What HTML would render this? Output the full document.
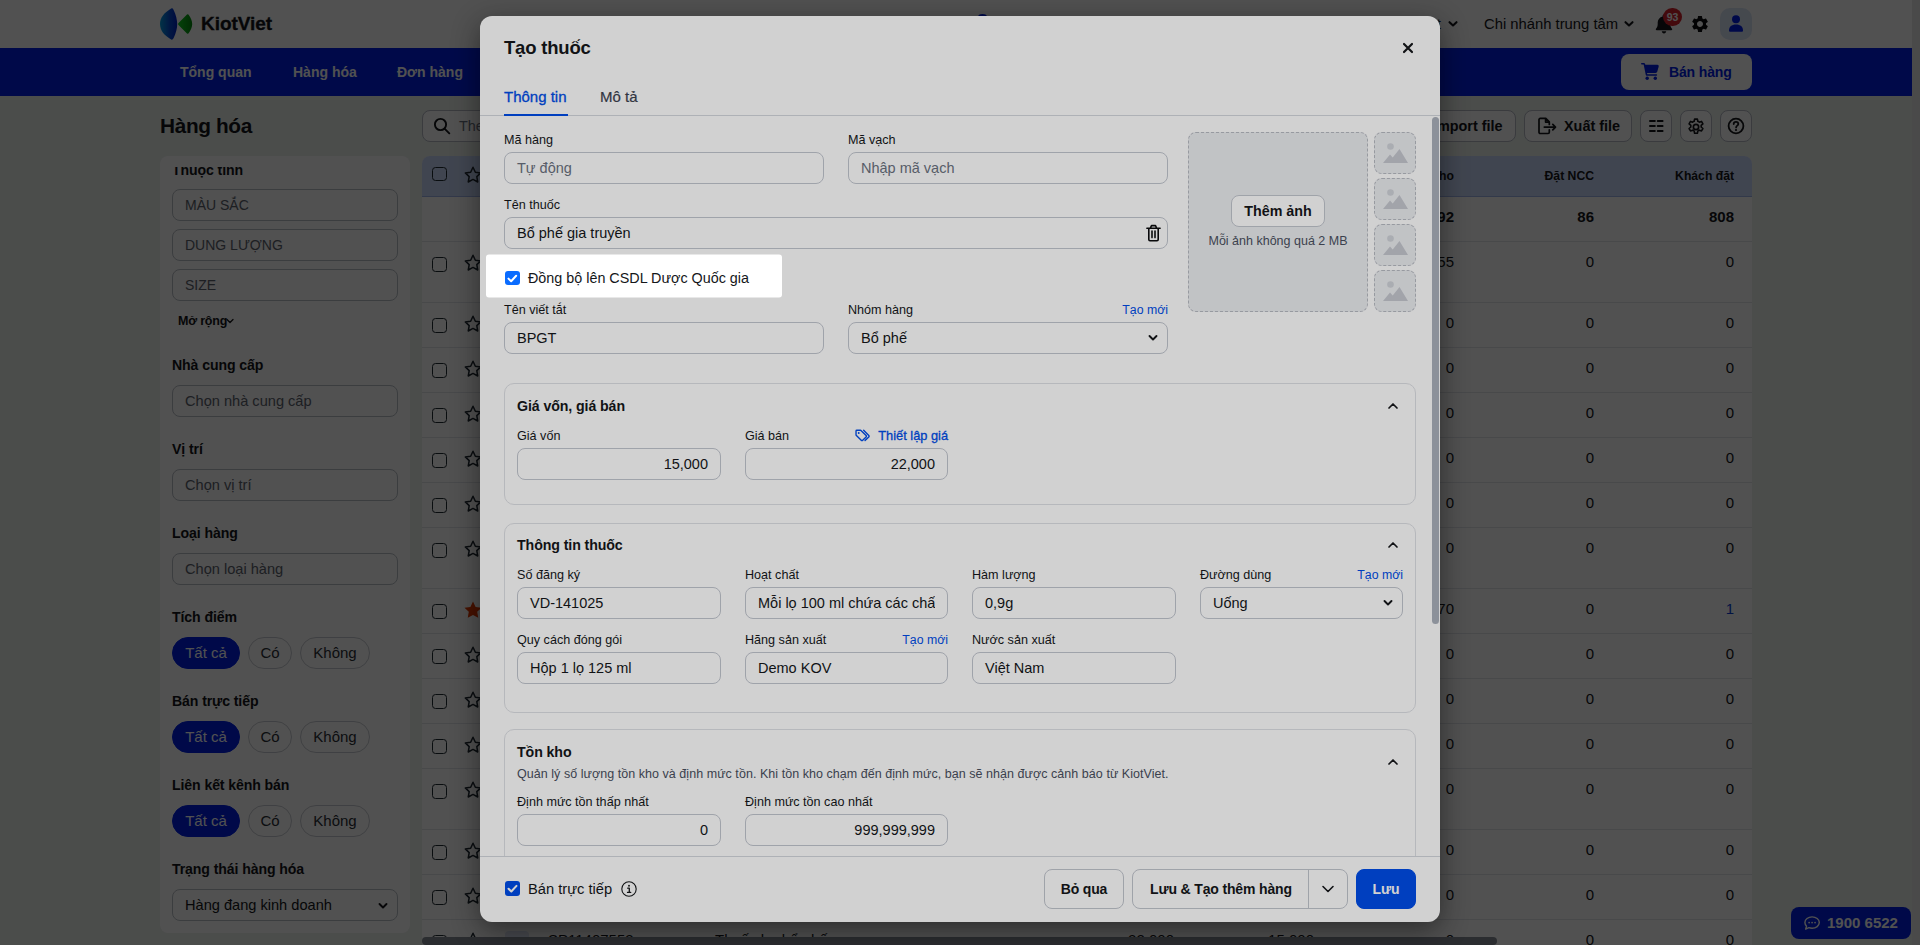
<!DOCTYPE html>
<html lang="vi">
<head>
<meta charset="utf-8">
<title>Hàng hóa - KiotViet</title>
<style>
*{box-sizing:border-box;margin:0;padding:0}
html,body{width:1920px;height:945px;overflow:hidden}
body{font-family:"Liberation Sans",sans-serif;font-size:14px;color:#15171a;background:#ecf1ee;position:relative}
.abs{position:absolute}
svg{display:block}
/* ---------- page ---------- */
#page{position:absolute;left:0;top:0;width:1912px;height:945px;overflow:hidden;background:#ecf1ee}
#vscroll{position:absolute;left:1912px;top:0;width:8px;height:945px;background:#e9e9e9}
#hdr{position:absolute;left:0;top:0;width:1912px;height:48px;background:#fff}
#nav{position:absolute;left:0;top:48px;width:1912px;height:48px;background:#0020e8}
#nav .it{position:absolute;top:0;height:48px;line-height:48px;font-size:14px;font-weight:700;color:#fff;white-space:nowrap}
.brand{position:absolute;left:201px;top:0;height:48px;line-height:48px;-webkit-text-stroke:.3px #15171a;font-size:19px;font-weight:700;color:#15171a;letter-spacing:-.05px}
.hr-t{position:absolute;top:0;height:48px;line-height:49px;font-size:14.8px;color:#15171a;white-space:nowrap}
#sell{position:absolute;left:1621px;top:6px;width:131px;height:36px;border-radius:8px;background:#fff;color:#0020e8;font-weight:700;font-size:14px;line-height:36px}
#sell span{position:absolute;left:48px;top:0;letter-spacing:-.15px}
/* toolbar */
.h1{position:absolute;left:160px;top:110px;height:32px;line-height:32px;font-size:20.8px;font-weight:700;letter-spacing:-.35px}
.tb{position:absolute;top:110px;height:32px;border:1px solid #b6bac3;border-radius:8px;background:#fff;font-weight:700;font-size:14.4px;line-height:30px;white-space:nowrap}
/* sidebar */
#side{position:absolute;left:160px;top:156px;width:250px;height:777px;background:#fff;border-radius:8px;overflow:hidden}
#side .ttl{position:absolute;left:12px;font-size:14.1px;font-weight:700;height:20px;line-height:20px;white-space:nowrap;letter-spacing:-.1px}
#side .inp{position:absolute;left:12px;width:226px;height:32px;border:1px solid #bcc0c8;border-radius:8px;line-height:30px;padding-left:12px;font-size:14.6px;color:#5d636e;white-space:nowrap}
#side .pill{position:absolute;height:32px;border:1px solid #c9ccd3;border-radius:16px;line-height:30px;text-align:center;font-size:15px;color:#2b2f36}
#side .pill.on{background:#0020e8;border-color:#0020e8;color:#fff}
/* table */
#tbl{position:absolute;left:422px;top:156px;width:1330px;height:789px;background:#fff;border-radius:8px 8px 0 0;overflow:hidden}
#tbl .th{position:absolute;left:0;top:0;width:1330px;height:41px;background:#ccdafb;border-bottom:1px solid #9fb5ea}
#tbl .row{position:absolute;left:0;width:1330px;border-bottom:1px solid #e3e5e9}
#tbl .c{position:absolute;text-align:right;font-size:15px;white-space:nowrap;height:20px;line-height:20px;top:10px}
#tbl .hc{position:absolute;text-align:right;font-size:12.2px;font-weight:700;white-space:nowrap;height:40px;line-height:41px;top:0}
.cb{position:absolute;left:10px;width:14.800px;height:14.800px;border:1.400px solid #1f2a33;border-radius:3.500px}
.st{position:absolute;left:41px;width:20px;height:20px}
/* overlays */
#backdrop{position:absolute;left:0;top:0;width:1920px;height:945px;background:rgba(0,0,0,.61)}
#tour{position:absolute;left:0;top:0;width:1920px;height:945px;pointer-events:none}
/* ---------- modal ---------- */
#modal{position:absolute;left:480px;top:16px;width:960px;height:906px;background:#fff;border-radius:12px;box-shadow:0 8px 28px rgba(0,0,0,.45);overflow:hidden}
#modal .lbl{position:absolute;font-size:12.6px;height:18px;line-height:18px;white-space:nowrap;color:#15171a}
#modal .lnk{position:absolute;font-size:12.3px;height:18px;line-height:18px;white-space:nowrap;color:#004eea;text-align:right}
#modal .in{position:absolute;height:32px;border:1px solid #c3c7d0;border-radius:8px;line-height:31px;padding:0 12px;font-size:14.5px;white-space:nowrap;color:#15171a;background:#fff}
#modal .in>i{display:block;font-style:normal;overflow:hidden;height:30px}
#modal .in.ph{color:#6b7280}
#modal .in.r{text-align:right}
#modal .card{position:absolute;left:24px;width:912px;border:1px solid #dfe1e6;border-radius:10px}
#modal .ct{position:absolute;left:12px;font-size:14.2px;font-weight:700;height:20px;line-height:20px;white-space:nowrap;letter-spacing:-.1px}
#modal .thumb{position:absolute;left:894px;width:42px;height:42px;border:1px dashed #b9bcc4;border-radius:8px;background:#eceef1}
#modal .thumb svg{position:absolute;left:8px;top:10px}
#modal .chev{position:absolute}
#modal .btn{position:absolute;top:853px;height:40px;border:1px solid #c3c7cf;border-radius:8px;background:#fff;font-size:14px;font-weight:700;line-height:38px;text-align:center;white-space:nowrap;color:#15171a;letter-spacing:-.15px}
</style>
</head>
<body>
<div id="page">
  <div id="hdr">
    <svg class="abs" style="left:160px;top:8px" width="33" height="32" viewBox="0 0 33 32">
      <defs><linearGradient id="lg" x1="0" y1="0" x2="1" y2="0"><stop offset="0" stop-color="#0aa0e0"/><stop offset=".55" stop-color="#0a4fd0"/><stop offset="1" stop-color="#0424c8"/></linearGradient>
      <linearGradient id="lg2" x1="0" y1="0" x2="1" y2="0"><stop offset="0" stop-color="#10d020"/><stop offset="1" stop-color="#068a10"/></linearGradient></defs>
      <path d="M10.400 1 Q12.400 -.6 13.500 1.700 C16 7 17.200 11.500 17.200 16 C17.200 20.500 16 25 13.500 30.300 Q12.400 32.600 10.400 31 C4.500 27.500 0 22.500 0 16 C0 9.500 4.500 4.500 10.400 1Z" fill="url(#lg)"/>
      <path d="M18.500 14.900 L27 6.600 Q28 5.700 28.800 6.900 C30.900 10 32.200 13 32.200 16 C32.200 19 30.900 22 28.800 25.100 Q28 26.300 27 25.400 L18.500 17.100 Q17.500 16 18.500 14.900Z" fill="url(#lg2)"/>
    </svg>
    <div class="abs" style="left:978px;top:13.500px;width:9px;height:6px;border-radius:50%;background:#0020e8"></div>
    <div class="brand">KiotViet</div>
    <div class="hr-t" style="left:1375px">Tiếng Việt</div>
    <svg class="abs" style="left:1448px;top:19px" width="10" height="10" viewBox="0 0 10 10"><path d="M1.500 3.200 L5 6.500 L8.500 3.200" fill="none" stroke="#15171a" stroke-width="2.100" stroke-linecap="round" stroke-linejoin="round"/></svg>
    <div class="hr-t" style="left:1484px">Chi nhánh trung tâm</div>
    <svg class="abs" style="left:1624px;top:19px" width="10" height="10" viewBox="0 0 10 10"><path d="M1.500 3.200 L5 6.500 L8.500 3.200" fill="none" stroke="#15171a" stroke-width="2.100" stroke-linecap="round" stroke-linejoin="round"/></svg>
    <!-- bell -->
    <svg class="abs" style="left:1655px;top:14px" width="18" height="20" viewBox="0 0 18 20"><path d="M9 0.5c-.8 0-1.4.6-1.4 1.3v.6C4.700 3 2.700 5.500 2.700 8.500v1.800c0 1.700-.6 3.300-1.700 4.500-.5.600-.1 1.500.7 1.500h14.600c.8 0 1.200-.9.700-1.500-1.100-1.200-1.700-2.800-1.700-4.500V8.500c0-3-2-5.500-4.900-6.100v-.6C10.400 1.100 9.800.5 9 .5zM6.800 17.300c0 1.200 1 2.200 2.200 2.200s2.200-1 2.200-2.200z" fill="#15171a"/></svg>
    <div class="abs" style="left:1663px;top:8px;width:19px;height:18px;border-radius:9px;background:#d9232e;color:#fff;font-size:10.500px;font-weight:700;line-height:18px;text-align:center">93</div>
    <!-- gear -->
    <svg class="abs" style="left:1690px;top:14px" width="20" height="20" viewBox="0 0 24 24"><path fill="#0b0c0e" d="M19.140 12.940c.040-.300.060-.610.060-.940 0-.320-.020-.640-.070-.940l2.030-1.580a.490.490 0 0 0 .12-.610l-1.920-3.320a.488.488 0 0 0-.590-.220l-2.390.960c-.500-.380-1.030-.700-1.620-.940l-.360-2.540a.484.484 0 0 0-.480-.410h-3.840c-.240 0-.430.170-.470.410l-.360 2.540c-.590.240-1.130.570-1.620.940l-2.390-.960c-.220-.080-.470 0-.590.220L2.740 8.870c-.120.210-.080.470.12.610l2.030 1.580c-.050.300-.090.630-.09.940s.020.640.070.940l-2.030 1.580a.490.490 0 0 0-.12.610l1.920 3.320c.12.220.370.290.590.220l2.390-.960c.500.380 1.030.700 1.620.940l.360 2.540c.050.240.240.410.480.410h3.840c.240 0 .440-.170.470-.410l.360-2.540c.590-.240 1.130-.560 1.620-.940l2.390.960c.220.080.470 0 .590-.220l1.920-3.320c.120-.220.070-.470-.120-.610l-2.010-1.580zM12 15.600c-1.980 0-3.600-1.620-3.600-3.600s1.620-3.600 3.600-3.600 3.600 1.620 3.600 3.600-1.620 3.600-3.600 3.600z"/></svg>
    <!-- avatar -->
    <div class="abs" style="left:1720px;top:8px;width:32px;height:32px;border-radius:10px;background:#dbe4f8"></div>
    <svg class="abs" style="left:1729px;top:15px" width="14" height="17" viewBox="0 0 14 17"><circle cx="7" cy="4.200" r="4" fill="#0020e8"/><path d="M0 15.500C0 11.800 2.500 9.500 7 9.500s7 2.300 7 6c0 .800-.5 1.300-1.300 1.300H1.300C.5 16.800 0 16.300 0 15.500z" fill="#0020e8"/></svg>
  </div>
  <div id="nav">
    <div class="it" style="left:180px">Tổng quan</div>
    <div class="it" style="left:293px">Hàng hóa</div>
    <div class="it" style="left:397px">Đơn hàng</div>
    <div class="it" style="left:503px">Khách hàng</div>
    <div class="it" style="left:625px">Nhân viên</div>
    <div class="it" style="left:735px">Sổ quỹ</div>
    <div class="it" style="left:822px">Báo cáo</div>
    <div class="it" style="left:920px">Bán online</div>
    <div id="sell">
      <svg class="abs" style="left:20px;top:9px" width="18" height="17" viewBox="0 0 18 17"><path d="M0 .8C0 .4.400 0 .8 0h1.700c.8 0 1.500.5 1.700 1.300l.1.500h12.200c.8 0 1.400.8 1.200 1.600l-1.400 5.200c-.2.800-.900 1.300-1.700 1.300H6l.3 1.300h9.100c.5 0 .8.400.8.800s-.4.800-.8.800H5.600c-.4 0-.7-.3-.8-.7L2.700 1.800c0-.1-.1-.2-.3-.2H.8C.4 1.600 0 1.300 0 .8z" fill="#0020e8"/><circle cx="6.200" cy="15.200" r="1.700" fill="#0020e8"/><circle cx="14.300" cy="15.200" r="1.700" fill="#0020e8"/></svg>
      <span>Bán hàng</span>
    </div>
  </div>
  <div class="h1">Hàng hóa</div>
  <div class="tb" style="left:422px;width:560px;font-weight:400;color:#6b7280;padding-left:36px">Theo mã, tên hàng
    <svg class="abs" style="left:10px;top:6px" width="18" height="18" viewBox="0 0 18 18"><circle cx="7.500" cy="7.500" r="5.600" fill="none" stroke="#15171a" stroke-width="1.900"/><path d="M11.800 11.800L16.300 16.300" stroke="#15171a" stroke-width="1.900" stroke-linecap="round"/></svg>
  </div>
  <div class="tb" style="left:1290px;width:104px;padding-left:36px;background:#0020e8;border-color:#0020e8;color:#fff">Tạo mới</div>
  <div class="tb" style="left:1403px;width:113px;padding-left:29px">Import file</div>
  <div class="tb" style="left:1524px;width:108px;padding-left:39px">Xuất file
    <svg class="abs" style="left:12px;top:6px" width="20" height="18" viewBox="0 0 20 18"><path d="M12.300 12.800V15.300c0 .7-.5 1.200-1.200 1.200H3.200c-.7 0-1.200-.5-1.200-1.200V2.600c0-.7.500-1.200 1.200-1.200h5.600L12.300 4.900v2.500M8.600 1.600v3.500h3.500" fill="none" stroke="#15171a" stroke-width="1.700" stroke-linejoin="round" stroke-linecap="round"/><path d="M7.300 10.100h11M15.800 7.400l2.700 2.700-2.700 2.700" fill="none" stroke="#15171a" stroke-width="1.700" stroke-linejoin="round" stroke-linecap="round"/></svg>
  </div>
  <div class="tb" style="left:1640px;width:32px">
    <svg class="abs" style="left:8px;top:8px" width="14.600" height="14" viewBox="0 0 16 14" preserveAspectRatio="none"><path d="M1 2h5.500M9.500 2H15M1 7h5.500M9.500 7H15M1 12h5.500M9.500 12H15" stroke="#15171a" stroke-width="1.900" stroke-linecap="round"/></svg>
  </div>
  <div class="tb" style="left:1680px;width:32px">
    <svg class="abs" style="left:5px;top:6px" width="20" height="20" viewBox="0 0 24 24"><path fill="none" stroke="#15171a" stroke-width="1.900" stroke-linejoin="round" d="M10.300 2.500h3.400l.5 2.700c.6.200 1.200.6 1.800 1l2.600-.9 1.700 2.900-2.100 1.800c.1.700.1 1.300 0 2l2.100 1.800-1.700 2.900-2.600-.9c-.5.400-1.100.8-1.800 1l-.5 2.700h-3.400l-.5-2.700c-.6-.2-1.200-.6-1.800-1l-2.600.9-1.700-2.900 2.100-1.800c-.1-.7-.1-1.300 0-2L3.700 8.200l1.700-2.900 2.600.9c.5-.4 1.100-.8 1.800-1z"/><circle cx="12" cy="12" r="3.200" fill="none" stroke="#15171a" stroke-width="2"/></svg>
  </div>
  <div class="tb" style="left:1720px;width:32px">
    <svg class="abs" style="left:6px;top:6px" width="18" height="18" viewBox="0 0 18 18"><circle cx="9" cy="9" r="7.400" fill="none" stroke="#15171a" stroke-width="1.800"/><path d="M6.700 7.100c0-1.400 1-2.300 2.300-2.300s2.300.9 2.300 2.100c0 1.700-2.200 1.700-2.200 3.500" fill="none" stroke="#15171a" stroke-width="1.800" stroke-linecap="round"/><circle cx="9" cy="13" r="1.100" fill="#15171a"/></svg>
  </div>
  <div id="side"><div class="abs" style="left:0;top:11px;width:250px;height:766px;overflow:hidden"><div class="abs" style="left:0;top:-11px;width:250px;height:777px">
    <div class="ttl" style="top:3.500px">Thuộc tính</div>
    <div class="inp" style="top:33px;font-size:14px">MÀU SẮC</div>
    <div class="inp" style="top:73px;font-size:14px">DUNG LƯỢNG</div>
    <div class="inp" style="top:113px;font-size:14px">SIZE</div>
    <div class="abs" style="left:18px;top:155px;font-size:12.5px;font-weight:700;height:20px;line-height:20px;letter-spacing:-.2px">Mở rộng</div>
    <svg class="abs" style="left:66px;top:161px" width="8" height="8" viewBox="0 0 8 8"><path d="M1 2.500L4 5.500L7 2.500" fill="none" stroke="#15171a" stroke-width="1.300" stroke-linecap="round" stroke-linejoin="round"/></svg>
    <div class="ttl" style="top:199px">Nhà cung cấp</div>
    <div class="inp" style="top:229px">Chọn nhà cung cấp</div>
    <div class="ttl" style="top:283px">Vị trí</div>
    <div class="inp" style="top:313px">Chọn vị trí</div>
    <div class="ttl" style="top:367px">Loại hàng</div>
    <div class="inp" style="top:397px">Chọn loại hàng</div>
    <div class="ttl" style="top:451px">Tích điểm</div>
    <div class="pill on" style="left:12px;top:481px;width:68px">Tất cả</div>
    <div class="pill" style="left:88px;top:481px;width:44px">Có</div>
    <div class="pill" style="left:140px;top:481px;width:70px">Không</div>
    <div class="ttl" style="top:535px">Bán trực tiếp</div>
    <div class="pill on" style="left:12px;top:565px;width:68px">Tất cả</div>
    <div class="pill" style="left:88px;top:565px;width:44px">Có</div>
    <div class="pill" style="left:140px;top:565px;width:70px">Không</div>
    <div class="ttl" style="top:619px">Liên kết kênh bán</div>
    <div class="pill on" style="left:12px;top:649px;width:68px">Tất cả</div>
    <div class="pill" style="left:88px;top:649px;width:44px">Có</div>
    <div class="pill" style="left:140px;top:649px;width:70px">Không</div>
    <div class="ttl" style="top:703px">Trạng thái hàng hóa</div>
    <div class="inp" style="top:733px;color:#15171a">Hàng đang kinh doanh</div>
    <svg class="abs" style="left:218px;top:745px" width="10" height="10" viewBox="0 0 10 10"><path d="M1.500 3L5 6.500L8.500 3" fill="none" stroke="#15171a" stroke-width="1.900" stroke-linecap="round" stroke-linejoin="round"/></svg>
  </div></div></div>
  <div id="tbl">
    <div class="th"><div class="cb" style="top:10.500px"></div><svg class="st" style="top:8.700px" width="20" height="20" viewBox="0 0 20 20"><path d="M10 2.300l2.350 4.900 5.350.700-3.900 3.750.950 5.350L10 14.400 5.250 17l.950-5.350L2.300 7.900l5.350-.700z" fill="none" stroke="#1f2a33" stroke-width="1.500" stroke-linejoin="round"/></svg><div class="hc" style="left:126px">Mã hàng</div><div class="hc" style="left:293px">Tên hàng</div><div class="hc" style="right:578px">Giá bán</div><div class="hc" style="right:438px">Giá vốn</div><div class="hc" style="right:298px">Tồn kho</div><div class="hc" style="right:158px">Đặt NCC</div><div class="hc" style="right:18px">Khách đặt</div></div>
    <div class="row" style="top:41px;height:45px"><div class="c" style="right:298px;font-weight:700">1,292</div><div class="c" style="right:158px;font-weight:700">86</div><div class="c" style="right:18px;font-weight:700">808</div></div>
    <div class="row" style="top:86px;height:61px"><div class="cb" style="top:15px"></div><svg class="st" style="top:10.700px" width="20" height="20" viewBox="0 0 20 20"><path d="M10 2.300l2.350 4.900 5.350.700-3.900 3.750.950 5.350L10 14.400 5.250 17l.950-5.350L2.300 7.900l5.350-.700z" fill="none" stroke="#1f2a33" stroke-width="1.500" stroke-linejoin="round"/></svg><div class="abs" style="left:83px;top:11px;width:24px;height:24px;border-radius:4px;background:#dfe6f7"></div><div class="c" style="left:126px;text-align:left">SP11407568</div><div class="c" style="left:293px;text-align:left">Bổ phế Nam Hà chỉ khái lộ</div><div class="c" style="right:578px">22,000</div><div class="c" style="right:438px">15,000</div><div class="c" style="right:298px">55</div><div class="c" style="right:158px">0</div><div class="c" style="right:18px">0</div></div>
    <div class="row" style="top:147px;height:45px"><div class="cb" style="top:15px"></div><svg class="st" style="top:10.700px" width="20" height="20" viewBox="0 0 20 20"><path d="M10 2.300l2.350 4.900 5.350.700-3.900 3.750.950 5.350L10 14.400 5.250 17l.950-5.350L2.300 7.900l5.350-.700z" fill="none" stroke="#1f2a33" stroke-width="1.500" stroke-linejoin="round"/></svg><div class="abs" style="left:83px;top:11px;width:24px;height:24px;border-radius:4px;background:#dfe6f7"></div><div class="c" style="left:126px;text-align:left">SP11407567</div><div class="c" style="left:293px;text-align:left">Panadol Extra đỏ</div><div class="c" style="right:578px">22,000</div><div class="c" style="right:438px">15,000</div><div class="c" style="right:298px">0</div><div class="c" style="right:158px">0</div><div class="c" style="right:18px">0</div></div>
    <div class="row" style="top:192px;height:45px"><div class="cb" style="top:15px"></div><svg class="st" style="top:10.700px" width="20" height="20" viewBox="0 0 20 20"><path d="M10 2.300l2.350 4.900 5.350.700-3.900 3.750.950 5.350L10 14.400 5.250 17l.950-5.350L2.300 7.900l5.350-.700z" fill="none" stroke="#1f2a33" stroke-width="1.500" stroke-linejoin="round"/></svg><div class="abs" style="left:83px;top:11px;width:24px;height:24px;border-radius:4px;background:#dfe6f7"></div><div class="c" style="left:126px;text-align:left">SP11407566</div><div class="c" style="left:293px;text-align:left">Berberin 100mg</div><div class="c" style="right:578px">22,000</div><div class="c" style="right:438px">15,000</div><div class="c" style="right:298px">0</div><div class="c" style="right:158px">0</div><div class="c" style="right:18px">0</div></div>
    <div class="row" style="top:237px;height:45px"><div class="cb" style="top:15px"></div><svg class="st" style="top:10.700px" width="20" height="20" viewBox="0 0 20 20"><path d="M10 2.300l2.350 4.900 5.350.700-3.900 3.750.950 5.350L10 14.400 5.250 17l.950-5.350L2.300 7.900l5.350-.700z" fill="none" stroke="#1f2a33" stroke-width="1.500" stroke-linejoin="round"/></svg><div class="abs" style="left:83px;top:11px;width:24px;height:24px;border-radius:4px;background:#dfe6f7"></div><div class="c" style="left:126px;text-align:left">SP11407565</div><div class="c" style="left:293px;text-align:left">Vitamin C 500mg</div><div class="c" style="right:578px">22,000</div><div class="c" style="right:438px">15,000</div><div class="c" style="right:298px">0</div><div class="c" style="right:158px">0</div><div class="c" style="right:18px">0</div></div>
    <div class="row" style="top:282px;height:45px"><div class="cb" style="top:15px"></div><svg class="st" style="top:10.700px" width="20" height="20" viewBox="0 0 20 20"><path d="M10 2.300l2.350 4.900 5.350.700-3.900 3.750.950 5.350L10 14.400 5.250 17l.950-5.350L2.300 7.900l5.350-.700z" fill="none" stroke="#1f2a33" stroke-width="1.500" stroke-linejoin="round"/></svg><div class="abs" style="left:83px;top:11px;width:24px;height:24px;border-radius:4px;background:#dfe6f7"></div><div class="c" style="left:126px;text-align:left">SP11407564</div><div class="c" style="left:293px;text-align:left">Efferalgan 500mg</div><div class="c" style="right:578px">22,000</div><div class="c" style="right:438px">15,000</div><div class="c" style="right:298px">0</div><div class="c" style="right:158px">0</div><div class="c" style="right:18px">0</div></div>
    <div class="row" style="top:327px;height:45px"><div class="cb" style="top:15px"></div><svg class="st" style="top:10.700px" width="20" height="20" viewBox="0 0 20 20"><path d="M10 2.300l2.350 4.900 5.350.700-3.900 3.750.950 5.350L10 14.400 5.250 17l.950-5.350L2.300 7.900l5.350-.700z" fill="none" stroke="#1f2a33" stroke-width="1.500" stroke-linejoin="round"/></svg><div class="abs" style="left:83px;top:11px;width:24px;height:24px;border-radius:4px;background:#dfe6f7"></div><div class="c" style="left:126px;text-align:left">SP11407563</div><div class="c" style="left:293px;text-align:left">Nước muối sinh lý 0.9%</div><div class="c" style="right:578px">22,000</div><div class="c" style="right:438px">15,000</div><div class="c" style="right:298px">0</div><div class="c" style="right:158px">0</div><div class="c" style="right:18px">0</div></div>
    <div class="row" style="top:372px;height:61px"><div class="cb" style="top:15px"></div><svg class="st" style="top:10.700px" width="20" height="20" viewBox="0 0 20 20"><path d="M10 2.300l2.350 4.900 5.350.700-3.900 3.750.950 5.350L10 14.400 5.250 17l.950-5.350L2.300 7.900l5.350-.700z" fill="none" stroke="#1f2a33" stroke-width="1.500" stroke-linejoin="round"/></svg><div class="abs" style="left:83px;top:11px;width:24px;height:24px;border-radius:4px;background:#dfe6f7"></div><div class="c" style="left:126px;text-align:left">SP11407562</div><div class="c" style="left:293px;text-align:left">Khẩu trang y tế 4 lớp kháng khuẩn</div><div class="c" style="right:578px">22,000</div><div class="c" style="right:438px">15,000</div><div class="c" style="right:298px">0</div><div class="c" style="right:158px">0</div><div class="c" style="right:18px">0</div></div>
    <div class="row" style="top:433px;height:45px"><div class="cb" style="top:15px"></div><svg class="st" style="top:10.700px" width="20" height="20" viewBox="0 0 20 20"><path d="M10 1.500l2.600 5.400 5.900.800-4.300 4.100 1.050 5.900L10 14.900 4.750 17.700l1.050-5.900L1.500 7.700l5.900-.800z" fill="#e03a00"/></svg><div class="abs" style="left:83px;top:11px;width:24px;height:24px;border-radius:4px;background:#dfe6f7"></div><div class="c" style="left:126px;text-align:left">SP11407561</div><div class="c" style="left:293px;text-align:left">Siro ho Prospan 100ml</div><div class="c" style="right:578px">22,000</div><div class="c" style="right:438px">15,000</div><div class="c" style="right:298px">70</div><div class="c" style="right:158px">0</div><div class="c" style="right:18px;color:#0a3fd6">1</div></div>
    <div class="row" style="top:478px;height:45px"><div class="cb" style="top:15px"></div><svg class="st" style="top:10.700px" width="20" height="20" viewBox="0 0 20 20"><path d="M10 2.300l2.350 4.900 5.350.700-3.900 3.750.950 5.350L10 14.400 5.250 17l.950-5.350L2.300 7.900l5.350-.700z" fill="none" stroke="#1f2a33" stroke-width="1.500" stroke-linejoin="round"/></svg><div class="abs" style="left:83px;top:11px;width:24px;height:24px;border-radius:4px;background:#dfe6f7"></div><div class="c" style="left:126px;text-align:left">SP11407560</div><div class="c" style="left:293px;text-align:left">Băng cá nhân Urgo</div><div class="c" style="right:578px">22,000</div><div class="c" style="right:438px">15,000</div><div class="c" style="right:298px">0</div><div class="c" style="right:158px">0</div><div class="c" style="right:18px">0</div></div>
    <div class="row" style="top:523px;height:45px"><div class="cb" style="top:15px"></div><svg class="st" style="top:10.700px" width="20" height="20" viewBox="0 0 20 20"><path d="M10 2.300l2.350 4.900 5.350.700-3.900 3.750.950 5.350L10 14.400 5.250 17l.950-5.350L2.300 7.900l5.350-.700z" fill="none" stroke="#1f2a33" stroke-width="1.500" stroke-linejoin="round"/></svg><div class="abs" style="left:83px;top:11px;width:24px;height:24px;border-radius:4px;background:#dfe6f7"></div><div class="c" style="left:126px;text-align:left">SP11407559</div><div class="c" style="left:293px;text-align:left">Dầu gió xanh Thiên Thảo</div><div class="c" style="right:578px">22,000</div><div class="c" style="right:438px">15,000</div><div class="c" style="right:298px">0</div><div class="c" style="right:158px">0</div><div class="c" style="right:18px">0</div></div>
    <div class="row" style="top:568px;height:45px"><div class="cb" style="top:15px"></div><svg class="st" style="top:10.700px" width="20" height="20" viewBox="0 0 20 20"><path d="M10 2.300l2.350 4.900 5.350.700-3.900 3.750.950 5.350L10 14.400 5.250 17l.950-5.350L2.300 7.900l5.350-.700z" fill="none" stroke="#1f2a33" stroke-width="1.500" stroke-linejoin="round"/></svg><div class="abs" style="left:83px;top:11px;width:24px;height:24px;border-radius:4px;background:#dfe6f7"></div><div class="c" style="left:126px;text-align:left">SP11407558</div><div class="c" style="left:293px;text-align:left">Thuốc nhỏ mắt V.Rohto</div><div class="c" style="right:578px">22,000</div><div class="c" style="right:438px">15,000</div><div class="c" style="right:298px">0</div><div class="c" style="right:158px">0</div><div class="c" style="right:18px">0</div></div>
    <div class="row" style="top:613px;height:61px"><div class="cb" style="top:15px"></div><svg class="st" style="top:10.700px" width="20" height="20" viewBox="0 0 20 20"><path d="M10 2.300l2.350 4.900 5.350.700-3.900 3.750.950 5.350L10 14.400 5.250 17l.950-5.350L2.300 7.900l5.350-.700z" fill="none" stroke="#1f2a33" stroke-width="1.500" stroke-linejoin="round"/></svg><div class="abs" style="left:83px;top:11px;width:24px;height:24px;border-radius:4px;background:#dfe6f7"></div><div class="c" style="left:126px;text-align:left">SP11407557</div><div class="c" style="left:293px;text-align:left">Men vi sinh Enterogermina 5ml</div><div class="c" style="right:578px">22,000</div><div class="c" style="right:438px">15,000</div><div class="c" style="right:298px">0</div><div class="c" style="right:158px">0</div><div class="c" style="right:18px">0</div></div>
    <div class="row" style="top:674px;height:45px"><div class="cb" style="top:15px"></div><svg class="st" style="top:10.700px" width="20" height="20" viewBox="0 0 20 20"><path d="M10 2.300l2.350 4.900 5.350.700-3.900 3.750.950 5.350L10 14.400 5.250 17l.950-5.350L2.300 7.900l5.350-.700z" fill="none" stroke="#1f2a33" stroke-width="1.500" stroke-linejoin="round"/></svg><div class="abs" style="left:83px;top:11px;width:24px;height:24px;border-radius:4px;background:#dfe6f7"></div><div class="c" style="left:126px;text-align:left">SP11407556</div><div class="c" style="left:293px;text-align:left">Cao dán Salonpas</div><div class="c" style="right:578px">22,000</div><div class="c" style="right:438px">15,000</div><div class="c" style="right:298px">0</div><div class="c" style="right:158px">0</div><div class="c" style="right:18px">0</div></div>
    <div class="row" style="top:719px;height:45px"><div class="cb" style="top:15px"></div><svg class="st" style="top:10.700px" width="20" height="20" viewBox="0 0 20 20"><path d="M10 2.300l2.350 4.900 5.350.700-3.900 3.750.950 5.350L10 14.400 5.250 17l.950-5.350L2.300 7.900l5.350-.700z" fill="none" stroke="#1f2a33" stroke-width="1.500" stroke-linejoin="round"/></svg><div class="abs" style="left:83px;top:11px;width:24px;height:24px;border-radius:4px;background:#dfe6f7"></div><div class="c" style="left:126px;text-align:left">SP11407555</div><div class="c" style="left:293px;text-align:left">Oresol cam</div><div class="c" style="right:578px">22,000</div><div class="c" style="right:438px">15,000</div><div class="c" style="right:298px">0</div><div class="c" style="right:158px">0</div><div class="c" style="right:18px">0</div></div>
    <div class="row" style="top:764px;height:45px"><div class="cb" style="top:15px"></div><svg class="st" style="top:10.700px" width="20" height="20" viewBox="0 0 20 20"><path d="M10 2.300l2.350 4.900 5.350.700-3.900 3.750.950 5.350L10 14.400 5.250 17l.950-5.350L2.300 7.900l5.350-.700z" fill="none" stroke="#1f2a33" stroke-width="1.500" stroke-linejoin="round"/></svg><div class="abs" style="left:83px;top:11px;width:24px;height:24px;border-radius:4px;background:#dfe6f7"></div><div class="c" style="left:126px;text-align:left">SP11407553</div><div class="c" style="left:293px;text-align:left">Thuốc ho bổ phế</div><div class="c" style="right:578px">22,000</div><div class="c" style="right:438px">15,000</div><div class="c" style="right:298px">0</div><div class="c" style="right:158px">0</div><div class="c" style="right:18px">0</div></div>
    <div class="abs" style="left:0;top:781px;width:1075px;height:8px;border-radius:4px;background:#8a8f99"></div>
  </div>
  <div class="abs" style="left:1791px;top:907px;width:120px;height:32px;border-radius:8px;background:#0020e8;color:#fff;font-weight:700;font-size:15px;line-height:32px;padding-left:36px;letter-spacing:0;white-space:nowrap">1900 6522
    <svg class="abs" style="left:13px;top:9px" width="16.200" height="14.400" viewBox="0 0 18 16"><path d="M9 1C4.600 1 1 3.800 1 7.300c0 1.500.7 2.900 1.800 4l-.9 3.200 3.500-1.500c1.100.4 2.300.6 3.600.6 4.400 0 8-2.800 8-6.300S13.400 1 9 1z" fill="none" stroke="#fff" stroke-width="1.600" stroke-linejoin="round"/><circle cx="5.700" cy="7.300" r="1" fill="#fff"/><circle cx="9" cy="7.300" r="1" fill="#fff"/><circle cx="12.300" cy="7.300" r="1" fill="#fff"/></svg>
  </div>
</div>
<div id="vscroll"></div>
<div id="backdrop"></div>
<div id="modal">
  <div class="abs" style="left:24px;top:20px;height:24px;line-height:24px;font-size:18.5px;font-weight:700;letter-spacing:-.2px;white-space:nowrap">Tạo thuốc</div>
  <svg class="abs" style="left:922px;top:26px" width="12" height="12" viewBox="0 0 12 12"><path d="M2 2L10 10M10 2L2 10" stroke="#15171a" stroke-width="2.200" stroke-linecap="round"/></svg>
  <div class="abs" style="left:24px;top:71px;height:20px;line-height:20px;font-size:15px;color:#004eea;white-space:nowrap;-webkit-text-stroke:.3px #004eea">Thông tin</div>
  <div class="abs" style="left:120px;top:71px;height:20px;line-height:20px;font-size:15px;color:#3c4250;white-space:nowrap;-webkit-text-stroke:.2px #3c4250">Mô tả</div>
  <div class="abs" style="left:0;top:99px;width:960px;height:1px;background:#d5d8de"></div>
  <div class="abs" style="left:24px;top:98px;width:64px;height:2px;background:#004eea"></div>
  <!-- scroll body -->
  <div class="abs" id="mbody" style="left:0;top:100px;width:960px;height:740px;overflow:hidden">
   <div class="abs" style="left:0;top:-100px;width:960px;height:1000px">
    <div class="lbl" style="left:24px;top:115px">Mã hàng</div>
    <div class="in ph" style="left:24px;top:136px;width:320px">Tự động</div>
    <div class="lbl" style="left:368px;top:115px">Mã vạch</div>
    <div class="in ph" style="left:368px;top:136px;width:320px">Nhập mã vạch</div>
    <div class="lbl" style="left:24px;top:180px">Tên thuốc</div>
    <div class="in" style="left:24px;top:201px;width:664px">Bổ phế gia truyền</div>
    <svg class="abs" style="left:665.500px;top:208px" width="15" height="18" viewBox="0 0 15 18"><path d="M.9 4.200h13.200M4.400 4L5.500 1.600h4l1.100 2.400M2.800 4.500v11c0 .7.500 1.200 1.200 1.200h7c.7 0 1.200-.5 1.200-1.200v-11M6 7v6.600M9 7v6.600" fill="none" stroke="#0b0c0e" stroke-width="1.600" stroke-linecap="round" stroke-linejoin="round"/></svg>
    <div class="abs" style="left:25px;top:254.700px;width:14.600px;height:14.600px;border-radius:3px;background:#0a6cff"></div>
    <svg class="abs" style="left:25px;top:254.700px" width="14.600" height="14.600" viewBox="0 0 14 14"><path d="M3.300 7.300L5.900 9.800L10.700 4.600" fill="none" stroke="#fff" stroke-width="1.900" stroke-linecap="round" stroke-linejoin="round"/></svg>
    <div class="abs" style="left:48px;top:252px;height:20px;line-height:20px;font-size:14.350px;white-space:nowrap;color:#15171a">Đồng bộ lên CSDL Dược Quốc gia</div>
    <div class="lbl" style="left:24px;top:285px">Tên viết tắt</div>
    <div class="in" style="left:24px;top:306px;width:320px">BPGT</div>
    <div class="lbl" style="left:368px;top:285px">Nhóm hàng</div>
    <div class="lnk" style="right:272px;top:285px">Tạo mới</div>
    <div class="in" style="left:368px;top:306px;width:320px">Bổ phế</div>
    <svg class="abs" style="left:668px;top:317px" width="10" height="10" viewBox="0 0 10 10"><path d="M1.500 3L5 6.500L8.500 3" fill="none" stroke="#15171a" stroke-width="1.900" stroke-linecap="round" stroke-linejoin="round"/></svg>
    <!-- images -->
    <div class="abs" style="left:708px;top:116px;width:180px;height:180px;border:1px dashed #b9bcc4;border-radius:8px;background:#eceef1"></div>
    <div class="abs" style="left:751px;top:179px;width:94px;height:32px;border:1px solid #c3c7cf;border-radius:8px;background:#fff;font-size:14.3px;font-weight:700;line-height:30px;text-align:center">Thêm ảnh</div>
    <div class="abs" style="left:708px;top:216px;width:180px;height:18px;line-height:18px;font-size:12.500px;color:#4a5060;text-align:center;white-space:nowrap">Mỗi ảnh không quá 2 MB</div>
    <div class="thumb" style="top:116px"><svg width="25" height="20" viewBox="0 0 25 20"><circle cx="7.500" cy="3.500" r="3.300" fill="#d0d3d9"/><path d="M0 20L7 11.500l2.700 3L16.500 6 25 20z" fill="#c6c9d0"/></svg></div>
    <div class="thumb" style="top:162px"><svg width="25" height="20" viewBox="0 0 25 20"><circle cx="7.500" cy="3.500" r="3.300" fill="#d0d3d9"/><path d="M0 20L7 11.500l2.700 3L16.500 6 25 20z" fill="#c6c9d0"/></svg></div>
    <div class="thumb" style="top:208px"><svg width="25" height="20" viewBox="0 0 25 20"><circle cx="7.500" cy="3.500" r="3.300" fill="#d0d3d9"/><path d="M0 20L7 11.500l2.700 3L16.500 6 25 20z" fill="#c6c9d0"/></svg></div>
    <div class="thumb" style="top:254px"><svg width="25" height="20" viewBox="0 0 25 20"><circle cx="7.500" cy="3.500" r="3.300" fill="#d0d3d9"/><path d="M0 20L7 11.500l2.700 3L16.500 6 25 20z" fill="#c6c9d0"/></svg></div>
    <!-- card 1 -->
    <div class="card" style="top:367px;height:122px"></div>
    <div class="ct" style="left:37px;top:380px">Giá vốn, giá bán</div>
    <svg class="chev" style="left:907px;top:384px" width="12" height="12" viewBox="0 0 12 12"><path d="M2 8L6 4L10 8" fill="none" stroke="#15171a" stroke-width="1.700" stroke-linecap="round" stroke-linejoin="round"/></svg>
    <div class="lbl" style="left:37px;top:411px">Giá vốn</div>
    <div class="in r" style="left:37px;top:432px;width:204px">15,000</div>
    <div class="lbl" style="left:265px;top:411px">Giá bán</div>
    <svg class="abs" style="left:375px;top:413px" width="15.600" height="13" viewBox="0 0 18 15"><path d="M1.200 2.400v4.200c0 .3.100.6.400.9l5.600 5.600c.5.500 1.200.5 1.700 0l3.900-3.900c.5-.5.500-1.200 0-1.700L7.200 1.900c-.2-.2-.5-.4-.9-.4H2.100c-.5 0-.9.400-.9.900z" fill="none" stroke="#004eea" stroke-width="1.600" stroke-linejoin="round"/><circle cx="4.300" cy="4.600" r="1.100" fill="#004eea"/><path d="M10 1.500l5.900 5.900c.5.500.5 1.200 0 1.700l-4.300 4.300" fill="none" stroke="#004eea" stroke-width="1.600" stroke-linecap="round" stroke-linejoin="round"/></svg>
    <div class="lnk" style="right:492px;top:411px;font-size:12.800px;-webkit-text-stroke:.3px #004eea">Thiết lập giá</div>
    <div class="in r" style="left:265px;top:432px;width:203px">22,000</div>
    <!-- card 2 -->
    <div class="card" style="top:507px;height:190px"></div>
    <div class="ct" style="left:37px;top:519px">Thông tin thuốc</div>
    <svg class="chev" style="left:907px;top:523px" width="12" height="12" viewBox="0 0 12 12"><path d="M2 8L6 4L10 8" fill="none" stroke="#15171a" stroke-width="1.700" stroke-linecap="round" stroke-linejoin="round"/></svg>
    <div class="lbl" style="left:37px;top:550px">Số đăng ký</div>
    <div class="in" style="left:37px;top:571px;width:204px">VD-141025</div>
    <div class="lbl" style="left:265px;top:550px">Hoạt chất</div>
    <div class="in" style="left:265px;top:571px;width:203px"><i>Mỗi lọ 100 ml chứa các chất chiết</i></div>
    <div class="lbl" style="left:492px;top:550px">Hàm lượng</div>
    <div class="in" style="left:492px;top:571px;width:204px">0,9g</div>
    <div class="lbl" style="left:720px;top:550px">Đường dùng</div>
    <div class="lnk" style="right:37px;top:550px">Tạo mới</div>
    <div class="in" style="left:720px;top:571px;width:203px">Uống</div>
    <svg class="abs" style="left:903px;top:582px" width="10" height="10" viewBox="0 0 10 10"><path d="M1.500 3L5 6.500L8.500 3" fill="none" stroke="#15171a" stroke-width="1.900" stroke-linecap="round" stroke-linejoin="round"/></svg>
    <div class="lbl" style="left:37px;top:615px">Quy cách đóng gói</div>
    <div class="in" style="left:37px;top:636px;width:204px">Hộp 1 lọ 125 ml</div>
    <div class="lbl" style="left:265px;top:615px">Hãng sản xuất</div>
    <div class="lnk" style="right:492px;top:615px">Tạo mới</div>
    <div class="in" style="left:265px;top:636px;width:203px">Demo KOV</div>
    <div class="lbl" style="left:492px;top:615px">Nước sản xuất</div>
    <div class="in" style="left:492px;top:636px;width:204px">Việt Nam</div>
    <!-- card 3 -->
    <div class="card" style="top:713px;height:200px"></div>
    <div class="ct" style="left:37px;top:726px">Tồn kho</div>
    <svg class="chev" style="left:907px;top:740px" width="12" height="12" viewBox="0 0 12 12"><path d="M2 8L6 4L10 8" fill="none" stroke="#15171a" stroke-width="1.700" stroke-linecap="round" stroke-linejoin="round"/></svg>
    <div class="abs" style="left:37px;top:749px;height:18px;line-height:18px;font-size:12.500px;color:#4a5060;white-space:nowrap;letter-spacing:.045px">Quản lý số lượng tồn kho và định mức tồn. Khi tồn kho chạm đến định mức, bạn sẽ nhận được cảnh báo từ KiotViet.</div>
    <div class="lbl" style="left:37px;top:777px">Định mức tồn thấp nhất</div>
    <div class="in r" style="left:37px;top:798px;width:204px">0</div>
    <div class="lbl" style="left:265px;top:777px">Định mức tồn cao nhất</div>
    <div class="in r" style="left:265px;top:798px;width:203px">999,999,999</div>
   </div>
  </div>
  <!-- scrollbar -->
  <div class="abs" style="left:952px;top:101px;width:7px;height:507px;border-radius:4px;background:#abb1bc"></div>
  <!-- footer -->
  <div class="abs" style="left:0;top:840px;width:960px;height:1px;background:#d5d8de"></div>
  <div class="abs" style="left:25px;top:865px;width:15px;height:15px;border-radius:3px;background:#004eea"></div>
  <svg class="abs" style="left:25px;top:865px" width="15" height="15" viewBox="0 0 14 14"><path d="M3.300 7.300L5.900 9.800L10.700 4.600" fill="none" stroke="#fff" stroke-width="1.900" stroke-linecap="round" stroke-linejoin="round"/></svg>
  <div class="abs" style="left:48px;top:863px;height:20px;line-height:20px;font-size:14.7px;white-space:nowrap">Bán trực tiếp</div>
  <svg class="abs" style="left:141px;top:864.500px" width="16" height="16" viewBox="0 0 16 16"><circle cx="8" cy="8" r="7.200" fill="none" stroke="#15171a" stroke-width="1.100"/><circle cx="8" cy="4.700" r=".95" fill="#15171a"/><path d="M6.700 7.200h1.600v4M6.500 11.400h3.200" fill="none" stroke="#15171a" stroke-width="1.300" stroke-linecap="round" stroke-linejoin="round"/></svg>
  <div class="btn" style="left:564px;width:80px">Bỏ qua</div>
  <div class="btn" style="left:652px;width:216px;text-align:left;padding-left:17px">Lưu &amp; Tạo thêm hàng</div>
  <div class="abs" style="left:828px;top:854px;width:1px;height:38px;background:#c3c7cf"></div>
  <svg class="abs" style="left:841px;top:867px" width="14" height="12" viewBox="0 0 14 12"><path d="M2 3.500L7 8.500L12 3.500" fill="none" stroke="#15171a" stroke-width="1.600" stroke-linecap="round" stroke-linejoin="round"/></svg>
  <div class="btn" style="left:876px;width:60px;background:#004eea;border-color:#004eea;color:#fff">Lưu</div>
</div>
<svg id="tour" width="1920" height="945" viewBox="0 0 1920 945"><path style="filter:blur(.5px)" fill="#000" fill-opacity=".18" fill-rule="evenodd" d="M-30 -30H1950V975H-30Z M489 254.500H779Q782 254.500 782 257.500V294.500Q782 297.500 779 297.500H489Q486 297.500 486 294.500V257.500Q486 254.500 489 254.500Z"/></svg>
</body>
</html>
